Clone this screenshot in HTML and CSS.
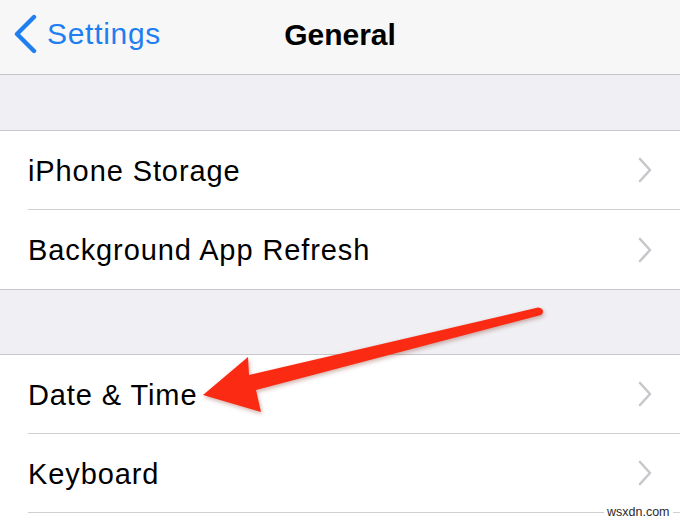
FILE: index.html
```html
<!DOCTYPE html>
<html>
<head>
<meta charset="utf-8">
<link rel="stylesheet" href="styles.css">
</head>
<body>
<div class="screen">
  <header class="nav">
    <div class="back">
      <svg class="back-chevron" width="24" height="40" viewBox="0 0 24 40"><polyline points="20,3 3,20 20,37" fill="none" stroke="#1f7ff0" stroke-width="4.4" stroke-linecap="round" stroke-linejoin="round"/></svg>
      <span class="back-label">Settings</span>
    </div>
    <h1 class="title">General</h1>
  </header>
  <div class="spacer spacer-top"></div>
  <section class="group">
    <div class="row"><div class="row-inner"><span class="label">iPhone Storage</span><svg class="chev" width="16" height="26" viewBox="0 0 16 26"><polyline points="3,2 13,13 3,24" fill="none" stroke="#c7c7cc" stroke-width="2.6" stroke-linecap="round" stroke-linejoin="round"/></svg></div></div>
    <div class="row"><div class="row-inner"><span class="label">Background App Refresh</span><svg class="chev" width="16" height="26" viewBox="0 0 16 26"><polyline points="3,2 13,13 3,24" fill="none" stroke="#c7c7cc" stroke-width="2.6" stroke-linecap="round" stroke-linejoin="round"/></svg></div></div>
  </section>
  <div class="spacer spacer-mid"></div>
  <section class="group group-open">
    <div class="row"><div class="row-inner"><span class="label">Date &amp; Time</span><svg class="chev" width="16" height="26" viewBox="0 0 16 26"><polyline points="3,2 13,13 3,24" fill="none" stroke="#c7c7cc" stroke-width="2.6" stroke-linecap="round" stroke-linejoin="round"/></svg></div></div>
    <div class="row"><div class="row-inner"><span class="label">Keyboard</span><svg class="chev" width="16" height="26" viewBox="0 0 16 26"><polyline points="3,2 13,13 3,24" fill="none" stroke="#c7c7cc" stroke-width="2.6" stroke-linecap="round" stroke-linejoin="round"/></svg></div></div>
  </section>
  <svg class="arrow" width="680" height="522" viewBox="0 0 680 522">
    <path d="M203,395 L248,357 L249,375 L538,307.5 Q543,308 543,311.5 Q543,315 539,315.5 L256,390 L261,412 Z" fill="#fb2a12"/>
  </svg>
  <span class="watermark">wsxdn.com</span>
</div>
</body>
</html>
```
FILE: styles.css
```css
html, body {
  margin: 0;
  padding: 0;
  background: #ffffff;
}
.screen {
  position: relative;
  width: 680px;
  height: 522px;
  overflow: hidden;
  background: #ffffff;
  font-family: "Liberation Sans", Arial, sans-serif;
  color: #000;
}
.nav {
  height: 75px;
  box-sizing: border-box;
  border-bottom: 1px solid #c4c4c8;
  background: #f7f7f7;
  display: flex;
  align-items: center;
  justify-content: center;
  position: relative;
}
.back {
  position: absolute;
  left: 14px;
  top: 14px;
  display: flex;
  align-items: center;
  gap: 9px;
}
.back-chevron {
  display: block;
}
.back-label {
  color: #1f7ff0;
  font-size: 30px;
  letter-spacing: 0.7px;
  line-height: 40px;
}
.title {
  margin: 0;
  font-size: 30px;
  font-weight: 700;
  line-height: 40px;
  padding-bottom: 4px;
}
.spacer {
  background: #efeff4;
  box-sizing: border-box;
  border-bottom: 1px solid #c8c7cc;
}
.spacer-top {
  height: 56px;
}
.spacer-mid {
  height: 65px;
}
.group {
  background: #fff;
  border-bottom: 1px solid #c8c7cc;
}
.group-open {
  border-bottom: none;
}
.row {
  height: 79px;
  padding-left: 28px;
  box-sizing: border-box;
}
.row-inner {
  height: 100%;
  box-sizing: border-box;
  display: flex;
  align-items: center;
  justify-content: space-between;
  padding-right: 27px;
  border-bottom: 1px solid #d0d0d4;
}
.group .row:last-child .row-inner {
  border-bottom: none;
}
.group-open .row:last-child .row-inner {
  border-bottom: 1px solid #d0d0d4;
}
.label {
  font-size: 29px;
  letter-spacing: 0.9px;
  padding-top: 2px;
}
.chev {
  display: block;
}
.arrow {
  position: absolute;
  left: 0;
  top: 0;
  filter: drop-shadow(1px 2px 2px rgba(120, 30, 10, 0.35));
}
.watermark {
  position: absolute;
  left: 604px;
  top: 504px;
  padding: 0 3px;
  background: #fff;
  font-size: 12.5px;
  line-height: 16px;
  color: #2a2a2a;
}
```
